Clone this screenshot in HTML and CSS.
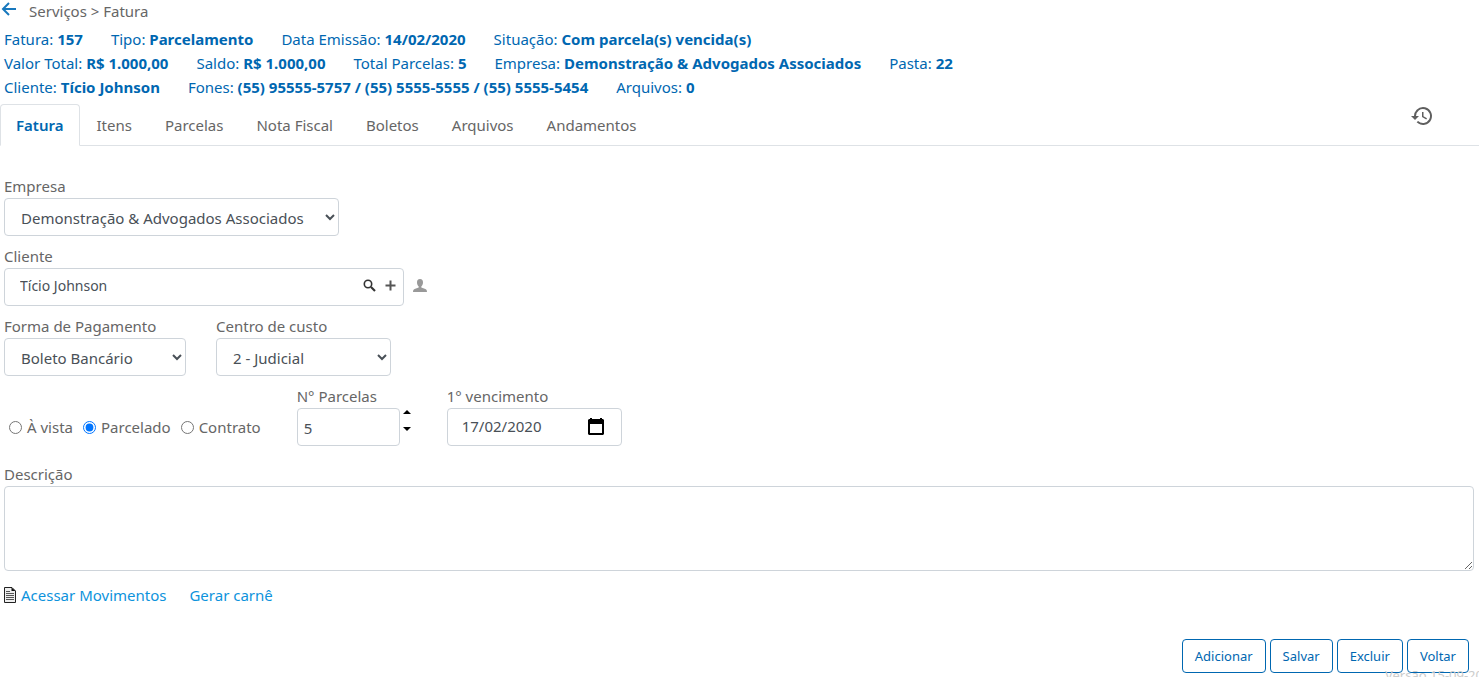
FILE: index.html
```html
<!DOCTYPE html>
<html lang="pt-BR">
<head>
<meta charset="utf-8">
<title>Fatura</title>
<link rel="stylesheet" href="styles.css">
</head>
<body>
<header class="header">
  <nav class="breadcrumb">
    <button class="icon-button back" type="button" aria-label="Voltar à lista">
      <svg width="16" height="14" viewBox="0 0 16 14" fill="none" stroke="#1878bd" stroke-width="2"><path d="M16 7H3M9 1L3 7l6 6"/></svg>
    </button>
    <span>Serviços &gt; Fatura</span>
  </nav>
  <div class="summary">
    <div class="summary-row">
      <span>Fatura: <b>157</b></span><span>Tipo: <b>Parcelamento</b></span><span>Data Emissão: <b>14/02/2020</b></span><span>Situação: <b>Com parcela(s) vencida(s)</b></span>
    </div>
    <div class="summary-row">
      <span>Valor Total: <b>R$ 1.000,00</b></span><span>Saldo: <b>R$ 1.000,00</b></span><span>Total Parcelas: <b>5</b></span><span>Empresa: <b>Demonstração &amp; Advogados Associados</b></span><span>Pasta: <b>22</b></span>
    </div>
    <div class="summary-row">
      <span>Cliente: <b>Tício Johnson</b></span><span>Fones: <b>(55) 95555-5757 / (55) 5555-5555 / (55) 5555-5454</b></span><span>Arquivos: <b>0</b></span>
    </div>
  </div>
</header>

<div class="tabbar">
  <nav class="tabs">
    <a class="tab active" href="#fatura">Fatura</a>
    <a class="tab" href="#itens">Itens</a>
    <a class="tab" href="#parcelas">Parcelas</a>
    <a class="tab" href="#nota">Nota Fiscal</a>
    <a class="tab" href="#boletos">Boletos</a>
    <a class="tab" href="#arquivos">Arquivos</a>
    <a class="tab" href="#andamentos">Andamentos</a>
  </nav>
  <button class="icon-button history" type="button" aria-label="Histórico">
    <svg width="24" height="24" viewBox="0 0 24 24" fill="#5f5f5f"><path d="M13 3a9 9 0 0 0-9 9H1l4 4 4-4H6a7 7 0 1 1 2.050 4.950l-1.420 1.420A9 9 0 1 0 13 3zm-1 5v5l4.300 2.550.700-1.200-3.500-2.100V8z"/></svg>
  </button>
</div>

<form class="form">
  <div class="field">
    <label for="empresa">Empresa</label>
    <select id="empresa" class="control select w-company"><option>Demonstração &amp; Advogados Associados</option></select>
  </div>

  <div class="field">
    <label for="cliente">Cliente</label>
    <div class="client-line">
      <div class="control client-box">
        <input id="cliente" class="client-input" type="text" value="Tício Johnson">
        <button class="icon-button" type="button" aria-label="Pesquisar">
          <svg width="13" height="13" viewBox="0 0 13 13" fill="none" stroke="#333"><circle cx="5" cy="5" r="3.700" stroke-width="1.600"/><path d="M8 8l4 4" stroke-width="2.200"/></svg>
        </button>
        <button class="icon-button" type="button" aria-label="Incluir">
          <svg width="11" height="11" viewBox="0 0 11 11" fill="none" stroke="#555" stroke-width="2"><path d="M5.500 .5v10M.5 5.500h10"/></svg>
        </button>
      </div>
      <button class="icon-button client-link" type="button" aria-label="Ver cliente">
        <svg width="14" height="14" viewBox="0 0 14 14" fill="#999"><path d="M7 0C4.800 0 4 1.600 4 3.400c0 1.600.700 3.200 1.700 4v1.200L1.600 10C.5 10.500 0 11.300 0 13h14c0-1.700-.5-2.500-1.600-3L8.300 8.600V7.400c1-.8 1.700-2.400 1.700-4C10 1.600 9.200 0 7 0z"/></svg>
      </button>
    </div>
  </div>

  <div class="row">
    <div class="field">
      <label for="forma">Forma de Pagamento</label>
      <select id="forma" class="control select w-payment"><option>Boleto Bancário</option></select>
    </div>
    <div class="field">
      <label for="centro">Centro de custo</label>
      <select id="centro" class="control select w-medium"><option>2 - Judicial</option></select>
    </div>
  </div>

  <div class="row plan-row">
    <div class="radios">
      <label class="radio"><input type="radio" name="plano">À vista</label>
      <label class="radio"><input type="radio" name="plano" checked>Parcelado</label>
      <label class="radio"><input type="radio" name="plano">Contrato</label>
    </div>
    <div class="field">
      <label for="parcelas">N° Parcelas</label>
      <div class="number-line">
        <input id="parcelas" class="control number" type="number" value="5">
        <div class="stepper">
          <button class="icon-button" type="button" aria-label="Aumentar"><svg width="8" height="4" viewBox="0 0 8 4"><path d="M4 0l4 4H0z"/></svg></button>
          <button class="icon-button" type="button" aria-label="Diminuir"><svg width="8" height="4" viewBox="0 0 8 4"><path d="M0 0h8L4 4z"/></svg></button>
        </div>
      </div>
    </div>
    <div class="field">
      <label for="vencimento">1° vencimento</label>
      <div class="control date-box w-medium">
        <input id="vencimento" class="date-input" type="text" value="17/02/2020">
        <button class="icon-button" type="button" aria-label="Abrir calendário">
          <svg width="16" height="17" viewBox="0 0 16 17"><path fill-rule="evenodd" d="M2 0h2v1h8V0h2v1h1l1 1v14l-1 1H1l-1-1V2l1-1h1zM2 6v9h12V6z"/></svg>
        </button>
      </div>
    </div>
  </div>

  <div class="field">
    <label for="descricao">Descrição</label>
    <textarea id="descricao" class="control description"></textarea>
  </div>

  <div class="links">
    <a href="#movimentos"><svg width="12" height="16" viewBox="0 0 12 16"><path d="M.5.5h7.500L11.500 4v11.500H.5z" fill="#eee" stroke="#222"/><path d="M7.500.5V4h4z" fill="#111"/><path d="M2 4.500h4M2 6.500h8M2 8.500h8M2 10.500h8M2 12.500h8" stroke="#555"/></svg>Acessar Movimentos</a>
    <a href="#carne">Gerar carnê</a>
  </div>

  <div class="actions">
    <button class="btn" type="button">Adicionar</button>
    <button class="btn" type="button">Salvar</button>
    <button class="btn" type="button">Excluir</button>
    <button class="btn" type="button">Voltar</button>
  </div>
</form>
<div class="version">Versão 15-09-2020</div>
</body>
</html>
```
FILE: styles.css
```css
* { box-sizing: border-box; }
html { height: 100%; }
body {
  position: relative;
  height: 100%;
  margin: 0;
  overflow: hidden;
  background: #fff;
  color: #666;
  font: 15px/24px "Noto Sans", "Open Sans", sans-serif;
}
a { text-decoration: none; }
svg { display: block; }
.icon-button {
  display: flex;
  padding: 0;
  border: 0;
  background: none;
}

.breadcrumb {
  display: flex;
  align-items: flex-start;
  gap: 13px;
  height: 27px;
  line-height: 22px;
}
.back { padding-top: 2px; }
.summary { padding-left: 4px; color: #0067b1; }
.summary-row { display: flex; gap: 28px; white-space: nowrap; }

.tabbar {
  display: flex;
  justify-content: space-between;
  align-items: flex-start;
  margin-top: 5px;
  padding-right: 45px;
  border-bottom: 1px solid #dee2e6;
}
.tabs { display: flex; gap: 1px; margin-bottom: -1px; }
.tab {
  padding: 8px 15px;
  border: 1px solid transparent;
  border-radius: 4px 4px 0 0;
  color: #666;
}
.tab.active {
  border-color: #dee2e6 #dee2e6 #fff;
  background: #fff;
  color: #0067b1;
  font-weight: 600;
}

.form {
  display: flex;
  flex-direction: column;
  gap: 8px;
  padding: 28px 5px 0 4px;
}
.field { display: flex; flex-direction: column; align-items: flex-start; }
.row { display: flex; gap: 30px; }
.control {
  height: 38px;
  border: 1px solid #ced4da;
  border-radius: 4px;
  background: #fff;
  color: #495057;
  font: inherit;
}
.select { padding: 2px 0 0 12px; }
.w-company { width: 335px; }
.w-payment { width: 182px; }
.w-medium { width: 175px; }

.client-line { display: flex; align-items: center; gap: 9px; }
.client-box {
  display: flex;
  align-items: center;
  gap: 9px;
  width: 400px;
  padding: 0 7px 3px 15px;
}
.client-link { padding-bottom: 2px; }
.client-input, .date-input {
  flex: 1;
  min-width: 0;
  padding: 0;
  border: 0;
  outline: 0;
  background: none;
  color: inherit;
  font: inherit;
}
.client-input { font-size: 14px; }

.plan-row { gap: 36px; margin-bottom: 8px; }
.radios {
  display: flex;
  align-items: flex-end;
  gap: 10px;
  padding: 0 0 7px 5px;
}
.radio { display: flex; align-items: center; gap: 5px; }
.radio input { width: 13px; height: 13px; margin: 0; }
.number-line { display: flex; gap: 3px; width: 114px; }
.number {
  width: 103px;
  padding: 2px 6px 0;
  appearance: textfield;
}
.number::-webkit-inner-spin-button { appearance: none; margin: 0; }
.stepper { display: flex; flex-direction: column; gap: 13px; padding-top: 2px; }
.date-box { display: flex; align-items: center; padding: 0 17px 2px 14px; }

.description { width: 100%; height: 85px; resize: both; }

.links { display: flex; gap: 23px; padding-top: 4px; }
.links a { display: flex; align-items: center; gap: 5px; color: #0d93dc; }
.actions { display: flex; justify-content: flex-end; gap: 4px; padding: 24px 5px 0 0; }
.btn {
  height: 34px;
  padding: 0 12px;
  border: 1px solid #0067b1;
  border-radius: 4px;
  background: #fff;
  color: #0067b1;
  font: 13px/20px "Noto Sans", "Open Sans", sans-serif;
}
.version {
  position: absolute;
  top: 665px;
  left: calc(100% - 94px);
  color: #ccc;
  font-size: 13px;
  line-height: 20px;
  white-space: nowrap;
}
```
